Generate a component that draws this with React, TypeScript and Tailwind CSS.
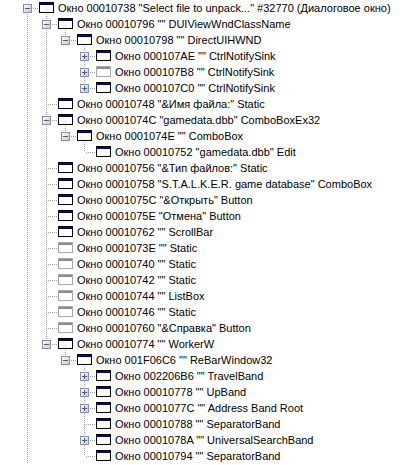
import React from "react"

type Node = {
  level: number
  text: string
  state: "open" | "closed" | "leaf"
  hidden?: boolean
}

const nodes: Node[] = [
  { level: 0, state: "open", text: 'Окно 00010738 "Select file to unpack..." #32770 (Диалоговое окно)' },
  { level: 1, state: "open", text: 'Окно 00010796 "" DUIViewWndClassName' },
  { level: 2, state: "open", text: 'Окно 00010798 "" DirectUIHWND' },
  { level: 3, state: "closed", text: 'Окно 000107AE "" CtrlNotifySink' },
  { level: 3, state: "closed", hidden: true, text: 'Окно 000107B8 "" CtrlNotifySink' },
  { level: 3, state: "closed", text: 'Окно 000107C0 "" CtrlNotifySink' },
  { level: 1, state: "leaf", text: 'Окно 00010748 "&Имя файла:" Static' },
  { level: 1, state: "open", text: 'Окно 0001074C "gamedata.dbb" ComboBoxEx32' },
  { level: 2, state: "open", text: 'Окно 0001074E "" ComboBox' },
  { level: 3, state: "leaf", text: 'Окно 00010752 "gamedata.dbb" Edit' },
  { level: 1, state: "leaf", text: 'Окно 00010756 "&Тип файлов:" Static' },
  { level: 1, state: "leaf", text: 'Окно 00010758 "S.T.A.L.K.E.R. game database" ComboBox' },
  { level: 1, state: "leaf", text: 'Окно 0001075C "&Открыть" Button' },
  { level: 1, state: "leaf", text: 'Окно 0001075E "Отмена" Button' },
  { level: 1, state: "leaf", text: 'Окно 00010762 "" ScrollBar' },
  { level: 1, state: "leaf", hidden: true, text: 'Окно 0001073E "" Static' },
  { level: 1, state: "leaf", hidden: true, text: 'Окно 00010740 "" Static' },
  { level: 1, state: "leaf", hidden: true, text: 'Окно 00010742 "" Static' },
  { level: 1, state: "leaf", hidden: true, text: 'Окно 00010744 "" ListBox' },
  { level: 1, state: "leaf", hidden: true, text: 'Окно 00010746 "" Static' },
  { level: 1, state: "leaf", hidden: true, text: 'Окно 00010760 "&Справка" Button' },
  { level: 1, state: "open", text: 'Окно 00010774 "" WorkerW' },
  { level: 2, state: "open", text: 'Окно 001F06C6 "" ReBarWindow32' },
  { level: 3, state: "closed", text: 'Окно 002206B6 "" TravelBand' },
  { level: 3, state: "closed", text: 'Окно 00010778 "" UpBand' },
  { level: 3, state: "closed", text: 'Окно 0001077C "" Address Band Root' },
  { level: 3, state: "leaf", text: 'Окно 00010788 "" SeparatorBand' },
  { level: 3, state: "closed", text: 'Окно 0001078A "" UniversalSearchBand' },
  { level: 3, state: "leaf", text: 'Окно 00010794 "" SeparatorBand' },
]

const INDENT = 19
const LINE = "#a0a0a0"

// does the row at index i have a later sibling (same level, same parent)?
function hasNext(i: number) {
  const lvl = nodes[i].level
  if (lvl === 0) return true // root list continues below the visible area
  for (let j = i + 1; j < nodes.length; j++) {
    if (nodes[j].level < lvl) return false
    if (nodes[j].level === lvl) return true
  }
  return false
}

function ancestorAt(i: number, lvl: number) {
  for (let j = i; j >= 0; j--) if (nodes[j].level === lvl) return j
  return -1
}

function VLine({ x, y1, y2 }: { x: number; y1: number; y2: number }) {
  return <line x1={x + 0.5} x2={x + 0.5} y1={y1} y2={y2} stroke={LINE} strokeDasharray="1 1" />
}

function ExpandBox({ cx, open }: { cx: number; open: boolean }) {
  const id = `g${cx}`
  return (
    <g>
      <defs>
        <linearGradient id={id} x1="0" y1="0" x2="1" y2="1">
          <stop offset="0" stopColor="#ffffff" />
          <stop offset="1" stopColor="#c8c8c8" />
        </linearGradient>
      </defs>
      <rect x={cx - 3.5} y={4.5} width={8} height={8} fill={`url(#${id})`} stroke="#8e8f8f" />
      <line x1={cx - 2} x2={cx + 3} y1={8.5} y2={8.5} stroke="#3c5da8" />
      {!open && <line x1={cx + 0.5} x2={cx + 0.5} y1={6} y2={11} stroke="#3c5da8" />}
    </g>
  )
}

function WindowGlyph({ x, hidden }: { x: number; hidden?: boolean }) {
  return (
    <g>
      <rect x={x + 0.5} y={2.5} width={14} height={10} fill="#ffffff" stroke={hidden ? "#a9a9a9" : "#000000"} />
      <rect x={x + 1} y={3} width={13} height={2} fill={hidden ? "#8c8c8c" : "#000080"} />
    </g>
  )
}

function Row({ i }: { i: number }) {
  const n = nodes[i]
  const L = n.level
  const cx = 27 + INDENT * L
  const iconX = 39 + INDENT * L
  const next = hasNext(i)

  const guides: React.ReactNode[] = []
  for (let k = 0; k < L; k++) {
    const a = ancestorAt(i, k)
    if (a >= 0 && hasNext(a)) guides.push(<VLine key={k} x={27 + INDENT * k} y1={0} y2={16} />)
  }

  return (
    <div className="flex h-4 items-center">
      <svg width={iconX + 16} height={16} className="shrink-0">
        {guides}
        {i > 0 && <VLine x={cx} y1={0} y2={8} />}
        {next && <VLine x={cx} y1={8} y2={16} />}
        <line x1={cx + 2} x2={iconX} y1={8.5} y2={8.5} stroke={LINE} strokeDasharray="1 1" />
        {n.state !== "leaf" && <ExpandBox cx={cx} open={n.state === "open"} />}
        <WindowGlyph x={iconX} hidden={n.hidden} />
        {n.state === "open" && <VLine x={cx + INDENT} y1={14} y2={16} />}
      </svg>
      <span className="ml-[3px] whitespace-pre text-[11px] leading-4 text-black">{n.text}</span>
    </div>
  )
}

export default function App() {
  return (
    <div
      className="h-[465px] w-[402px] overflow-hidden bg-white"
      style={{ fontFamily: '"Liberation Sans", Arial, sans-serif' }}
    >
      {nodes.map((_, i) => (
        <Row key={i} i={i} />
      ))}
    </div>
  )
}
